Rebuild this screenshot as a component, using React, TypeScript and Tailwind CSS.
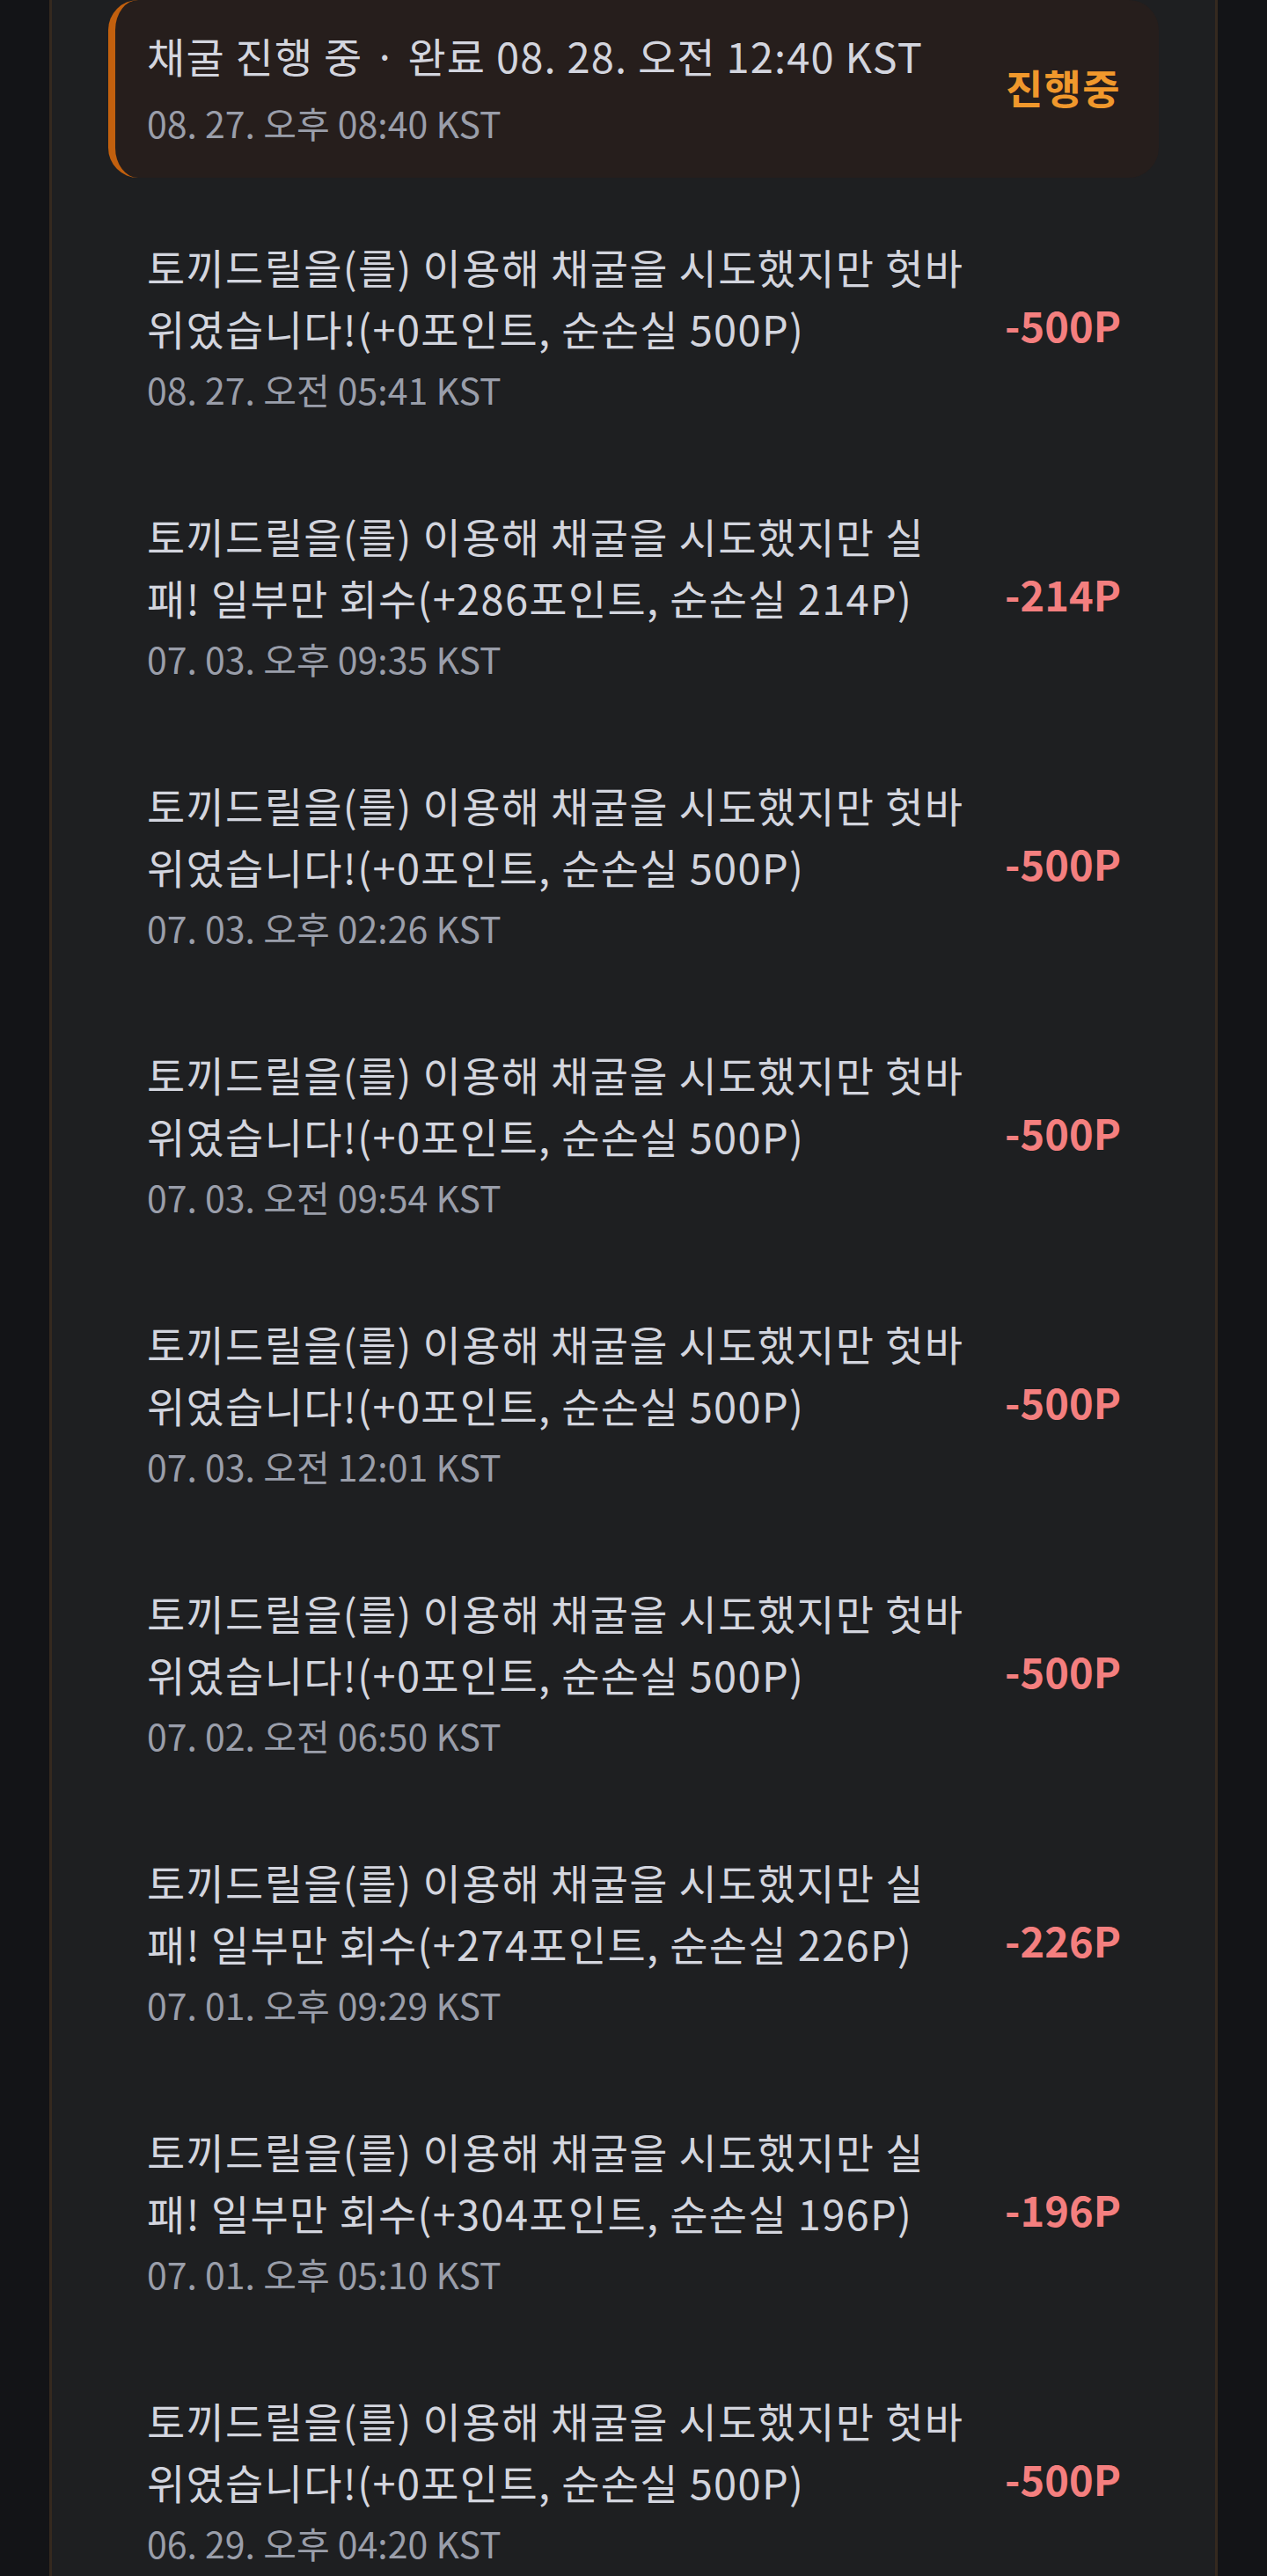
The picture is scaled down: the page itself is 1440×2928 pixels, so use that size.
import React from "react";

type Row = { text: string; date: string; amount: string };

const miss = "토끼드릴을(를) 이용해 채굴을 시도했지만 헛바위였습니다!(+0포인트, 순손실 500P)";
const fail = (got: number, loss: number) =>
  `토끼드릴을(를) 이용해 채굴을 시도했지만 실패! 일부만 회수(+${got}포인트, 순손실 ${loss}P)`;

const rows: Row[] = [
  { text: miss, date: "08. 27. 오전 05:41 KST", amount: "-500P" },
  { text: fail(286, 214), date: "07. 03. 오후 09:35 KST", amount: "-214P" },
  { text: miss, date: "07. 03. 오후 02:26 KST", amount: "-500P" },
  { text: miss, date: "07. 03. 오전 09:54 KST", amount: "-500P" },
  { text: miss, date: "07. 03. 오전 12:01 KST", amount: "-500P" },
  { text: miss, date: "07. 02. 오전 06:50 KST", amount: "-500P" },
  { text: fail(274, 226), date: "07. 01. 오후 09:29 KST", amount: "-226P" },
  { text: fail(304, 196), date: "07. 01. 오후 05:10 KST", amount: "-196P" },
  { text: miss, date: "06. 29. 오후 04:20 KST", amount: "-500P" },
];

const font = { fontFamily: '"Noto Sans CJK KR", "Noto Sans", sans-serif' };

export default function App() {
  return (
    <div className="min-h-screen bg-[#131417]" style={font}>
      <div className="mx-[56px] h-[2928px] overflow-hidden border-x-[3px] border-[#35291f] bg-[#1e1f21] px-[64px]">
        {/* in-progress card */}
        <div className="flex items-center rounded-[34px] border-l-[8px] border-[#c2600e] bg-[#261e1c] pb-[35px] pl-[36px] pr-[43px] pt-[28px]">
          <div className="min-w-0 flex-1">
            <div className="text-[47px] leading-[70px] tracking-[0.025em] text-[#d3d5de]">
              채굴 진행 중 · 완료 08. 28. 오전 12:40 KST
            </div>
            <div className="mt-[13px] text-[41px] leading-[56px] text-[#9a9eaa]">
              08. 27. 오후 08:40 KST
            </div>
          </div>
          <div className="shrink-0 text-[46px] font-bold leading-[60px] tracking-[0.03em] text-[#f0982c]">
            진행중
          </div>
        </div>

        <div className="mt-[14px]">
          {rows.map((r, i) => (
            <div key={i} className="flex items-center justify-between py-[52px] pl-[44px] pr-[43px]">
              <div className="w-[936px] shrink-0">
                <div className="text-[47px] leading-[70px] tracking-[0.028em] text-[#d3d5de]">{r.text}</div>
                <div className="mt-[6px] text-[41px] leading-[56px] text-[#9a9eaa]">{r.date}</div>
              </div>
              <div className="shrink-0 text-[47px] font-bold leading-[60px] text-[#f47f7f]">{r.amount}</div>
            </div>
          ))}
        </div>
      </div>
    </div>
  );
}
